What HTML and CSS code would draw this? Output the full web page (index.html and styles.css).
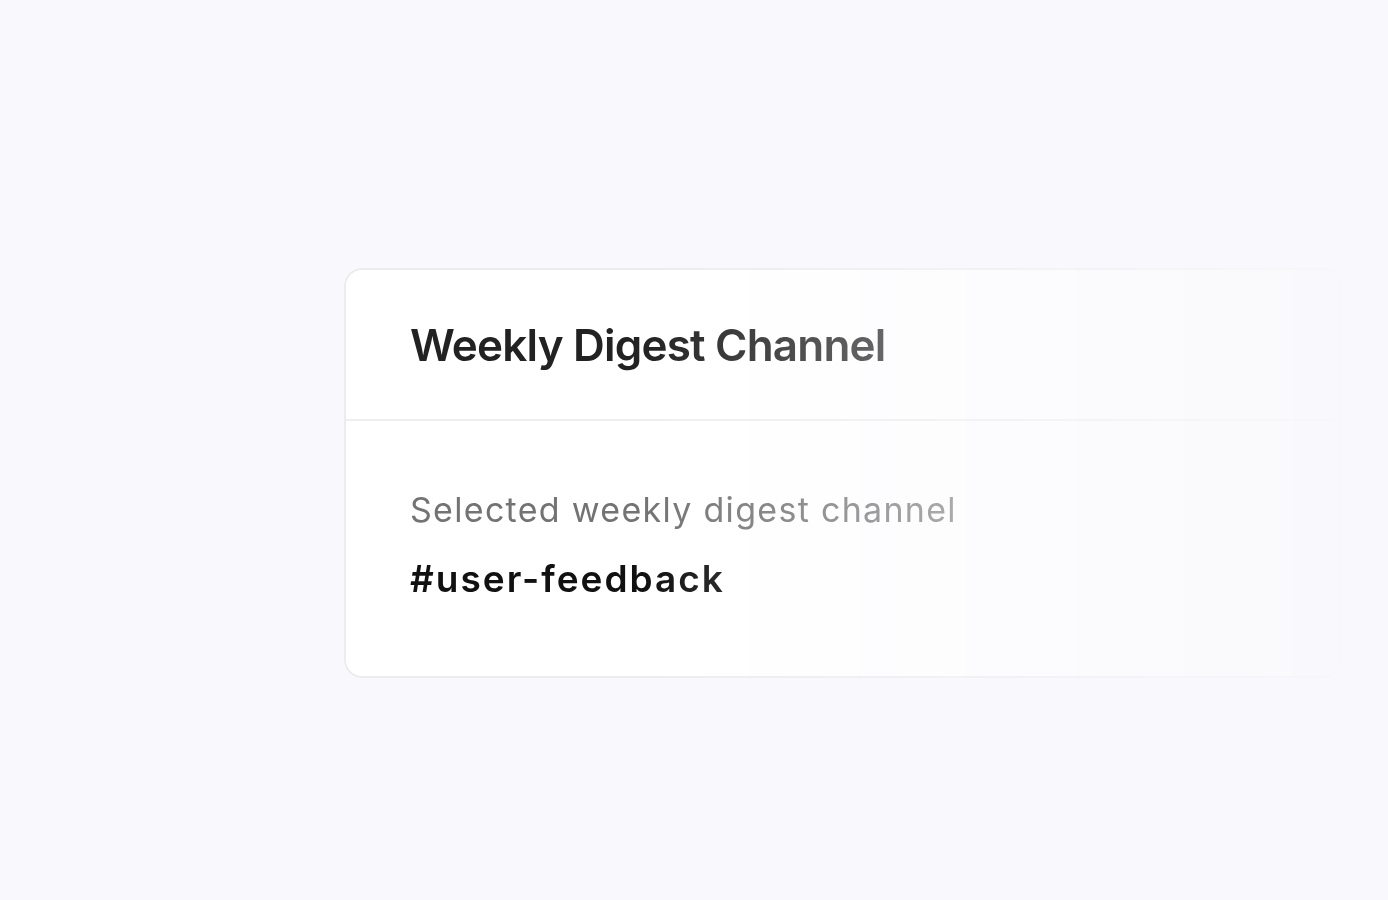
FILE: index.html
```html
<!DOCTYPE html>
<html lang="en">
<head>
<meta charset="utf-8">
<title>Weekly Digest Channel</title>
<link rel="stylesheet" href="styles.css">
</head>
<body>
<main class="stage">
  <section class="card">
    <header class="card-header">
      <h1 class="card-title">Weekly Digest Channel</h1>
    </header>
    <div class="card-body">
      <p class="label">Selected weekly digest channel</p>
      <p class="value">#user-feedback</p>
    </div>
  </section>
</main>
</body>
</html>
```

FILE: styles.css
```css
html, body {
  margin: 0;
  padding: 0;
}
body {
  background: #f9f9fd;
  font-family: Inter, "Noto Sans", sans-serif;
  width: 1388px;
  height: 900px;
  overflow: hidden;
}
.stage {
  padding: 268px 0 0 344px;
  display: flex;
}
.card {
  flex: none;
  width: 998px;
  background: #ffffff;
  border: 2px solid #ececee;
  border-radius: 18px;
  box-sizing: border-box;
  -webkit-mask-image: linear-gradient(to right, #000 30%, rgba(0, 0, 0, 0.08) 100%);
  mask-image: linear-gradient(to right, #000 30%, rgba(0, 0, 0, 0.08) 100%);
}
.card-header {
  height: 149px;
  display: flex;
  align-items: center;
  padding: 0 64px;
  border-bottom: 2px solid #eeeeef;
}
.card-title {
  margin: 0;
  font-size: 44px;
  font-weight: 600;
  color: #222222;
  letter-spacing: -0.8px;
}
.card-body {
  padding: 67px 64px 75px;
}
.label {
  margin: 0;
  font-size: 34px;
  font-weight: 400;
  color: #737373;
  line-height: 44px;
  letter-spacing: 1.3px;
}
.value {
  margin: 25px 0 0;
  font-size: 37px;
  font-weight: 600;
  color: #111111;
  line-height: 44px;
  letter-spacing: 2px;
}
```
